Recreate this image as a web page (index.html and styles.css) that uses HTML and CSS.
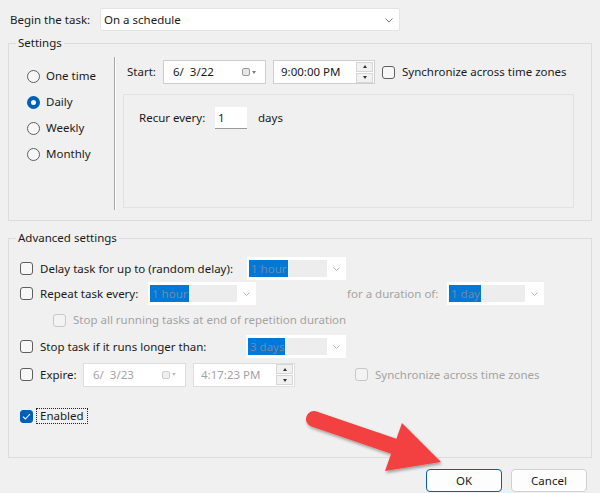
FILE: index.html
```html
<!DOCTYPE html>
<html lang="en">
<head>
<meta charset="utf-8">
<title>Trigger</title>
<link rel="stylesheet" href="styles.css">
</head>
<body>
<div class="top-row">
  <span class="top-label">Begin the task:</span>
  <div class="combo">
    <span>On a schedule</span>
    <svg class="chev" width="8" height="5" viewBox="0 0 8 5"><path d="M0.5 0.5 L4 4 L7.5 0.5" fill="none" stroke="#7a7a7a" stroke-width="1"/></svg>
  </div>
</div>

<fieldset class="group settings">
  <legend>Settings</legend>
  <div class="settings-body">
    <div class="radios">
      <div class="radio-row"><span class="radio"></span><span>One time</span></div>
      <div class="radio-row"><span class="radio checked"></span><span>Daily</span></div>
      <div class="radio-row"><span class="radio"></span><span>Weekly</span></div>
      <div class="radio-row"><span class="radio"></span><span>Monthly</span></div>
    </div>
    <div class="vsep"></div>
    <div class="sched">
      <div class="start-row">
        <span class="start-label">Start:</span>
        <div class="datebox">
          <span class="dt-text">6/&nbsp;&nbsp;3/22</span>
          <span class="cal"><span class="cal-sq"></span><span class="cal-tri"></span></span>
        </div>
        <div class="timebox">
          <span class="dt-text">9:00:00 PM</span>
          <span class="spin"><span class="spin-btn"><span class="tri-up"></span></span><span class="spin-btn"><span class="tri-down"></span></span></span>
        </div>
        <span class="chk"></span>
        <span>Synchronize across time zones</span>
      </div>
      <div class="recur-panel">
        <div class="recur-row">
          <span class="recur-label">Recur every:</span>
          <span class="numbox">1</span>
          <span class="days">days</span>
        </div>
      </div>
    </div>
  </div>
</fieldset>

<fieldset class="group advanced">
  <legend>Advanced settings</legend>
  <div class="adv-body">
    <div class="adv-row r1">
      <span class="chk"></span>
      <span class="lbl w-delay">Delay task for up to (random delay):</span>
      <div class="ddl w99"><span class="ddl-field"><span class="sel">1 hour</span></span><span class="ddl-chev"><svg width="7" height="4" viewBox="0 0 7 4"><path d="M0.5 0.5 L3.5 3.5 L6.5 0.5" fill="none" stroke="#b5b5b5" stroke-width="1"/></svg></span></div>
    </div>
    <div class="adv-row r2">
      <span class="chk"></span>
      <span class="lbl w-repeat">Repeat task every:</span>
      <div class="ddl w108"><span class="ddl-field"><span class="sel">1 hour</span></span><span class="ddl-chev"><svg width="7" height="4" viewBox="0 0 7 4"><path d="M0.5 0.5 L3.5 3.5 L6.5 0.5" fill="none" stroke="#b5b5b5" stroke-width="1"/></svg></span></div>
      <span class="lbl dis w-dur">for a duration of:</span>
      <div class="ddl w97"><span class="ddl-field"><span class="sel">1 day</span></span><span class="ddl-chev"><svg width="7" height="4" viewBox="0 0 7 4"><path d="M0.5 0.5 L3.5 3.5 L6.5 0.5" fill="none" stroke="#b5b5b5" stroke-width="1"/></svg></span></div>
    </div>
    <div class="adv-row r3">
      <span class="chk dis"></span>
      <span class="dis">Stop all running tasks at end of repetition duration</span>
    </div>
    <div class="adv-row r4">
      <span class="chk"></span>
      <span class="lbl w-stop">Stop task if it runs longer than:</span>
      <div class="ddl w100"><span class="ddl-field"><span class="sel">3 days</span></span><span class="ddl-chev"><svg width="7" height="4" viewBox="0 0 7 4"><path d="M0.5 0.5 L3.5 3.5 L6.5 0.5" fill="none" stroke="#b5b5b5" stroke-width="1"/></svg></span></div>
    </div>
    <div class="adv-row r5">
      <span class="chk"></span>
      <span class="lbl w-expire">Expire:</span>
      <div class="datebox dis-box">
        <span class="dt-text dis">6/&nbsp;&nbsp;3/23</span>
        <span class="cal dim"><span class="cal-sq"></span><span class="cal-tri"></span></span>
      </div>
      <div class="timebox dis-box">
        <span class="dt-text dis">4:17:23 PM</span>
        <span class="spin"><span class="spin-btn"><span class="tri-up"></span></span><span class="spin-btn"><span class="tri-down"></span></span></span>
      </div>
      <span class="chk dis sync-dis"></span>
      <span class="dis">Synchronize across time zones</span>
    </div>
    <div class="adv-row r6">
      <span class="chk checked"><svg width="9" height="7" viewBox="0 0 9 7"><path d="M1 3.6 L3.4 6 L8 1" fill="none" stroke="#fff" stroke-width="1.1"/></svg></span>
      <span class="focus-lbl">Enabled</span>
    </div>
  </div>
</fieldset>

<div class="buttons">
  <div class="btn default">OK</div>
  <div class="btn">Cancel</div>
</div>

<svg class="arrow" width="600" height="493" viewBox="0 0 600 493">
  <defs>
    <filter id="sh" x="-20%" y="-20%" width="140%" height="140%">
      <feDropShadow dx="1" dy="2" stdDeviation="1.5" flood-color="#000" flood-opacity="0.35"/>
    </filter>
  </defs>
  <g filter="url(#sh)" fill="#f34141">
    <line x1="314" y1="419" x2="396" y2="447" stroke="#f34141" stroke-width="16" stroke-linecap="round"/>
    <polygon points="402,423 441,462 385,471"/>
  </g>
</svg>
</body>
</html>
```

FILE: styles.css
```css
* { box-sizing: border-box; }
html, body { margin: 0; padding: 0; }
body {
  width: 600px;
  height: 493px;
  background: #f0f0f0;
  font-family: "Noto Sans", "Open Sans", sans-serif;
  font-size: 11.5px;
  line-height: 16px;
  color: #1a1a1a;
  position: relative;
  overflow: hidden;
}

/* top row */
.top-row { display: flex; align-items: center; height: 23px; margin-top: 8px; padding-left: 10px; }
.top-label { width: 90px; padding-top: 1px; }
.combo {
  width: 300px; height: 23px; background: #fff;
  border: 1px solid #e4e4e4; border-radius: 2px;
  display: flex; align-items: center; padding-left: 3px; padding-top: 1px;
}
.chev { margin-left: auto; margin-right: 6px; }

/* group boxes */
.group { margin: 0 8px; padding: 0; border: 1px solid #dcdcdc; min-width: 0; }
.group legend { margin-left: 7px; padding: 0 2px; line-height: 16px; }
.settings { margin-top: 4px; }
.advanced { margin-top: 9px; }

/* settings */
.settings-body { display: flex; height: 169px; }
.radios { width: 105px; padding: 12px 0 0 18px; }
.radio-row { display: flex; align-items: center; height: 26px; gap: 6px; }
.radio {
  width: 13px; height: 13px; border-radius: 50%;
  border: 1px solid #5e5e5e; background: #f7f7f7; flex: none;
}
.radio.checked { border: 4px solid #005fb8; background: #fff; }
.vsep { width: 2px; height: 153px; margin-top: 6px; border-left: 1px solid #a5a5a5; background: #fff; }
.sched { padding: 9px 0 0 7px; }
.start-row { display: flex; align-items: center; height: 24px; padding-left: 4px; }
.start-label { width: 36px; }
.datebox, .timebox {
  height: 24px; background: #fff; border: 1px solid #cfcfcf;
  display: flex; align-items: center;
}
.datebox { width: 103px; padding-left: 9px; }
.timebox { width: 102px; margin-left: 7px; padding-left: 7px; margin-right: 7px; }
.dt-text { white-space: pre; }
.cal { margin-left: auto; margin-right: 9px; display: flex; align-items: center; gap: 2px; }
.cal-sq { width: 8px; height: 8px; border: 1px solid #9a9a9a; border-radius: 2px; background: #e6e6e6; }
.cal-tri { width: 0; height: 0; border-left: 2.5px solid transparent; border-right: 2.5px solid transparent; border-top: 3px solid #7a7a7a; }
.cal.dim .cal-sq { border-color: #cdcdcd; background: #efefef; }
.cal.dim .cal-tri { border-top-color: #c0c0c0; }
.spin { margin-left: auto; margin-right: 1px; display: flex; flex-direction: column; gap: 1px; }
.spin-btn {
  width: 17px; height: 10px; background: #f1f1f1; border: 1px solid #d6d6d6;
  display: flex; align-items: center; justify-content: center;
}
.tri-up { width: 0; height: 0; border-left: 2.5px solid transparent; border-right: 2.5px solid transparent; border-bottom: 3px solid #333; }
.tri-down { width: 0; height: 0; border-left: 2.5px solid transparent; border-right: 2.5px solid transparent; border-top: 3px solid #333; }

.chk {
  width: 13px; height: 13px; border: 1px solid #5e5e5e; border-radius: 3px;
  background: #f7f7f7; margin-right: 7px; flex: none;
  display: flex; align-items: center; justify-content: center;
}
.chk.dis { border-color: #c8c8c8; background: #f3f3f3; }
.chk.checked { background: #005fb8; border-color: #005fb8; margin-right: 3px; }

.recur-panel { margin-top: 10px; width: 451px; height: 114px; border: 1px solid #e2e2e2; padding: 12px 0 0 15px; }
.recur-row { display: flex; align-items: center; height: 22px; }
.recur-label { width: 76px; }
.numbox {
  width: 32px; height: 22px; background: #fff; border-bottom: 1px solid #9a9a9a;
  padding-left: 3px; display: flex; align-items: center;
}
.days { margin-left: 11px; }

/* advanced */
.adv-body { height: 200px; padding-left: 11px; }
.adv-row { display: flex; align-items: center; height: 23px; }
.r1 { margin-top: 11px; }
.r2 { margin-top: 2px; }
.r3 { margin-top: 3px; height: 24px; padding-left: 33px; }
.r4 { margin-top: 3px; }
.r5 { margin-top: 5px; }
.r6 { margin-top: 20px; height: 20px; }
.lbl { white-space: nowrap; flex: none; }
.w-delay { width: 207px; }
.w-repeat { width: 108px; }
.w-dur { width: 100px; margin-left: 91px; }
.w-stop { width: 206px; }
.w-expire { width: 43px; }
.dis { color: #a3a3a3; }

.ddl { height: 23px; background: #fff; padding: 3px 0 3px 2px; display: flex; flex: none; }
.w99 { width: 99px; }
.w108 { width: 108px; }
.w97 { width: 97px; }
.w100 { width: 100px; }
.ddl-field { flex: 1; background: #ededed; display: flex; }
.sel { background: #0078d7; color: #6f8aab; padding: 0 1px 0 2px; line-height: 17px; }
.ddl-chev { width: 19px; display: flex; align-items: center; justify-content: center; }

.dis-box { border-color: #dedede; }
.sync-dis { margin-left: 53px; }

.focus-lbl { border: 1px dotted #222; padding: 0 3px; line-height: 14px; }

/* buttons */
.buttons { display: flex; justify-content: flex-end; gap: 9px; margin-top: 11px; padding-right: 13px; }
.btn {
  width: 76px; height: 23px; border: 1px solid #d0d0d0; border-radius: 4px;
  background: #fdfdfd; display: flex; align-items: center; justify-content: center;
}
.btn.default { border-color: #005fb8; }

.arrow { position: absolute; left: 0; top: 0; pointer-events: none; }
```
